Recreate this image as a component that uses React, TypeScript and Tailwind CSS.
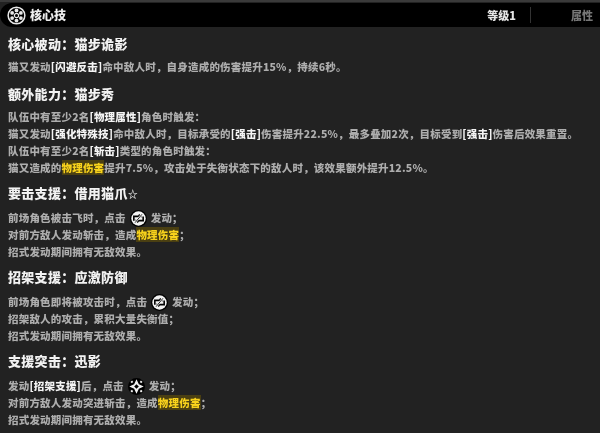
import React from 'react';

const Hl = ({ children }: { children: React.ReactNode }) => (
  <span className="bg-[#4a3f12] text-[#f8d21c]">{children}</span>
);

const Tag = ({ children }: { children: React.ReactNode }) => (
  <span className="text-[#f4f4f4]">{children}</span>
);

const SwapIcon = () => (
  <svg viewBox="0 0 16 16" className="mx-[4px] -my-[6px] inline-block h-[17px] w-[17px] align-[1.5px]">
    <circle cx="8" cy="8" r="8" fill="#000" />
    <circle cx="8" cy="8" r="6.8" fill="#f2f2f2" />
    <path d="M3.6 10V6H9.8L8.2 4.4M12.4 6V10H6.2L7.8 11.6" fill="none" stroke="#000" strokeWidth="1.5" />
    <path d="M4.2 12.6L11.8 3.4" stroke="#f2f2f2" strokeWidth="2" />
    <path d="M4.8 11.9L11.2 4.1" stroke="#000" strokeWidth="0.8" />
  </svg>
);

const DiamondIcon = () => (
  <svg viewBox="0 0 16 16" className="mx-[4px] -my-[6px] inline-block h-[17px] w-[17px] align-[1.5px]">
    <circle cx="8" cy="8" r="8" fill="#000" />
    <path d="M8 1.2L10.2 5.8 14.8 8 10.2 10.2 8 14.8 5.8 10.2 1.2 8 5.8 5.8Z" fill="#f2f2f2" />
    <path d="M3 4.4A6.3 6.3 0 0 1 4.4 3M11.6 3A6.3 6.3 0 0 1 13 4.4M13 11.6A6.3 6.3 0 0 1 11.6 13M4.4 13A6.3 6.3 0 0 1 3 11.6" stroke="#f2f2f2" strokeWidth="1.8" fill="none" />
    <path d="M8 5.8L10.2 8 8 10.2 5.8 8Z" fill="#000" />
  </svg>
);

const CoreIcon = () => (
  <svg viewBox="0 0 20 20" className="h-[19px] w-[19px]">
    <circle cx="10" cy="10" r="8.8" fill="none" stroke="#e8e8e8" strokeWidth="1.6" />
    <circle cx="10" cy="10" r="2.2" fill="none" stroke="#e8e8e8" strokeWidth="1.2" />
    <circle cx="10" cy="4.7" r="2" fill="#e8e8e8" />
    <circle cx="10" cy="15.3" r="2" fill="#e8e8e8" />
    <circle cx="5.4" cy="7.3" r="2" fill="#e8e8e8" />
    <circle cx="14.6" cy="7.3" r="2" fill="#e8e8e8" />
    <circle cx="5.4" cy="12.7" r="2" fill="#e8e8e8" />
    <circle cx="14.6" cy="12.7" r="2" fill="#e8e8e8" />
  </svg>
);

const Heading = ({ children, className }: { children: React.ReactNode; className: string }) => (
  <div className={`text-[13px] leading-[17px] font-black tracking-[0.3px] text-[#f2f2f2] ${className}`}>{children}</div>
);

export default function App() {
  return (
    <div
      className="h-[433px] w-[600px] overflow-hidden border-t-2 border-[#3a3a3a] bg-[#222222] pt-px font-black blur-[0.4px]"
      style={{ fontFamily: '"Noto Sans CJK SC", "Liberation Sans", sans-serif' }}
    >
      <div className="flex h-[24px] items-center rounded-l-[12px] bg-black px-[7px]">
        <CoreIcon />
        <span className="ml-[4px] text-[12px] text-[#eeeeee]">核心技</span>
        <span className="ml-auto text-[11px] text-[#e6e6e6]">等级1</span>
        <span className="mr-[40px] ml-[14px] h-[16px] w-px bg-[#333333]" />
        <span className="text-[11px] text-[#777777]">属性</span>
      </div>

      <div className="px-[8px] text-[10.5px] leading-[17px] tracking-[0.2px] text-[#adadad]">
        <Heading className="mt-[8px]">核心被动：猫步诡影</Heading>
        <p className="mt-[6px]">
          猫又发动<Tag>[闪避反击]</Tag>命中敌人时，自身造成的伤害提升15%，持续6秒。
        </p>

        <Heading className="mt-[10px]">额外能力：猫步秀</Heading>
        <p className="mt-[6px]">
          队伍中有至少2名<Tag>[物理属性]</Tag>角色时触发：
        </p>
        <p>
          猫又发动<Tag>[强化特殊技]</Tag>命中敌人时，目标承受的<Tag>[强击]</Tag>伤害提升22.5%，最多叠加2次，目标受到<Tag>[强击]</Tag>伤害后效果重置。
        </p>
        <p>
          队伍中有至少2名<Tag>[斩击]</Tag>类型的角色时触发：
        </p>
        <p>
          猫又造成的<Hl>物理伤害</Hl>提升7.5%，攻击处于失衡状态下的敌人时，该效果额外提升12.5%。
        </p>

        <Heading className="mt-[8px]">
          要击支援：借用猫爪<span className="text-[10px]">☆</span>
        </Heading>
        <p className="mt-[7px]">
          前场角色被击飞时，点击<SwapIcon />发动；
        </p>
        <p>
          对前方敌人发动斩击，造成<Hl>物理伤害</Hl>；
        </p>
        <p>招式发动期间拥有无敌效果。</p>

        <Heading className="mt-[8px]">招架支援：应激防御</Heading>
        <p className="mt-[8px]">
          前场角色即将被攻击时，点击<SwapIcon />发动；
        </p>
        <p>招架敌人的攻击，累积大量失衡值；</p>
        <p>招式发动期间拥有无敌效果。</p>

        <Heading className="mt-[8px]">支援突击：迅影</Heading>
        <p className="mt-[8px]">
          发动<Tag>[招架支援]</Tag>后，点击<DiamondIcon />发动；
        </p>
        <p>
          对前方敌人发动突进斩击，造成<Hl>物理伤害</Hl>；
        </p>
        <p>招式发动期间拥有无敌效果。</p>
      </div>
    </div>
  );
}
